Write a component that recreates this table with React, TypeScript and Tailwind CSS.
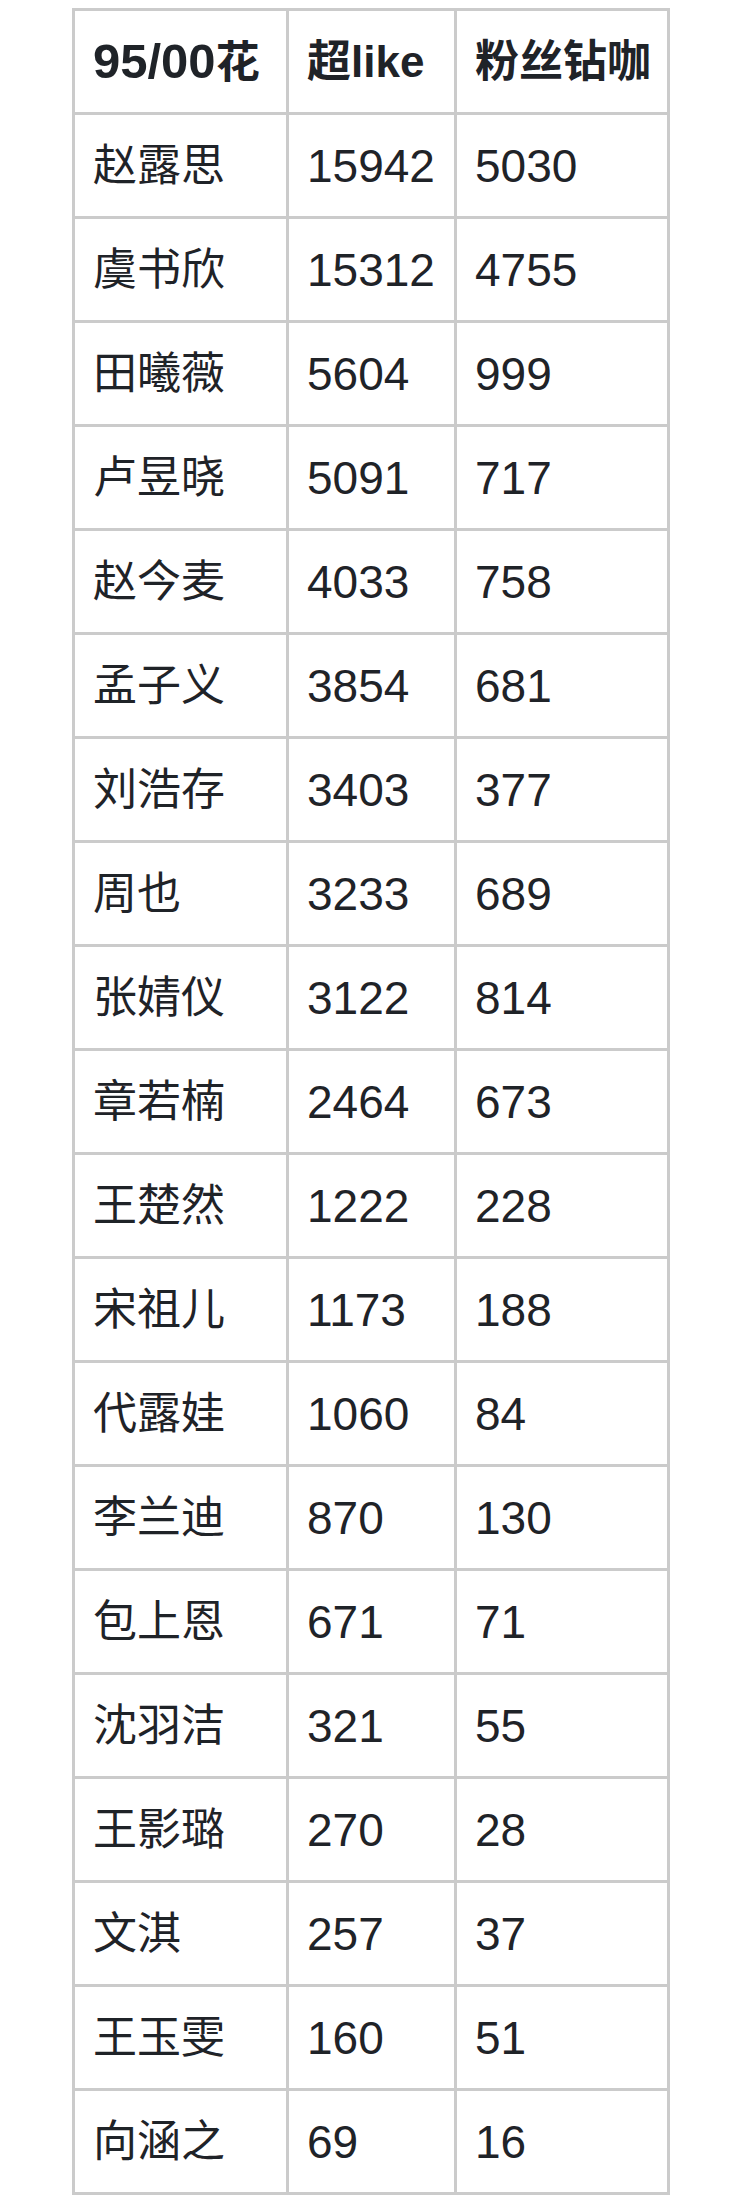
const rows: [string, string, string][] = [
  ["赵露思", "15942", "5030"],
  ["虞书欣", "15312", "4755"],
  ["田曦薇", "5604", "999"],
  ["卢昱晓", "5091", "717"],
  ["赵今麦", "4033", "758"],
  ["孟子义", "3854", "681"],
  ["刘浩存", "3403", "377"],
  ["周也", "3233", "689"],
  ["张婧仪", "3122", "814"],
  ["章若楠", "2464", "673"],
  ["王楚然", "1222", "228"],
  ["宋祖儿", "1173", "188"],
  ["代露娃", "1060", "84"],
  ["李兰迪", "870", "130"],
  ["包上恩", "671", "71"],
  ["沈羽洁", "321", "55"],
  ["王影璐", "270", "28"],
  ["文淇", "257", "37"],
  ["王玉雯", "160", "51"],
  ["向涵之", "69", "16"],
];

const cell = "border-[3px] border-[#cbcbcb] h-[104px] pl-[18px] text-left align-middle";

export default function App() {
  return (
    <div
      className="min-h-screen bg-white pl-[72px] pt-[8px] text-[#1f2328]"
      style={{ fontFamily: '"Liberation Sans", "Noto Sans CJK SC", sans-serif' }}
    >
      <table className="border-collapse w-[595px] table-fixed text-[44px] leading-none">
        <colgroup>
          <col className="w-[214px]" />
          <col className="w-[168px]" />
          <col className="w-[213px]" />
        </colgroup>
        <thead>
          <tr>
            <th className={`${cell} font-bold`}>
              <span className="text-[49px]">95/00</span>花
            </th>
            <th className={`${cell} font-bold`}>超like</th>
            <th className={`${cell} font-bold`}>粉丝钻咖</th>
          </tr>
        </thead>
        <tbody>
          {rows.map(([name, like, fans]) => (
            <tr key={name}>
              <td className={cell}>{name}</td>
              <td className={`${cell} text-[46px]`}>{like}</td>
              <td className={`${cell} text-[46px]`}>{fans}</td>
            </tr>
          ))}
        </tbody>
      </table>
    </div>
  );
}
